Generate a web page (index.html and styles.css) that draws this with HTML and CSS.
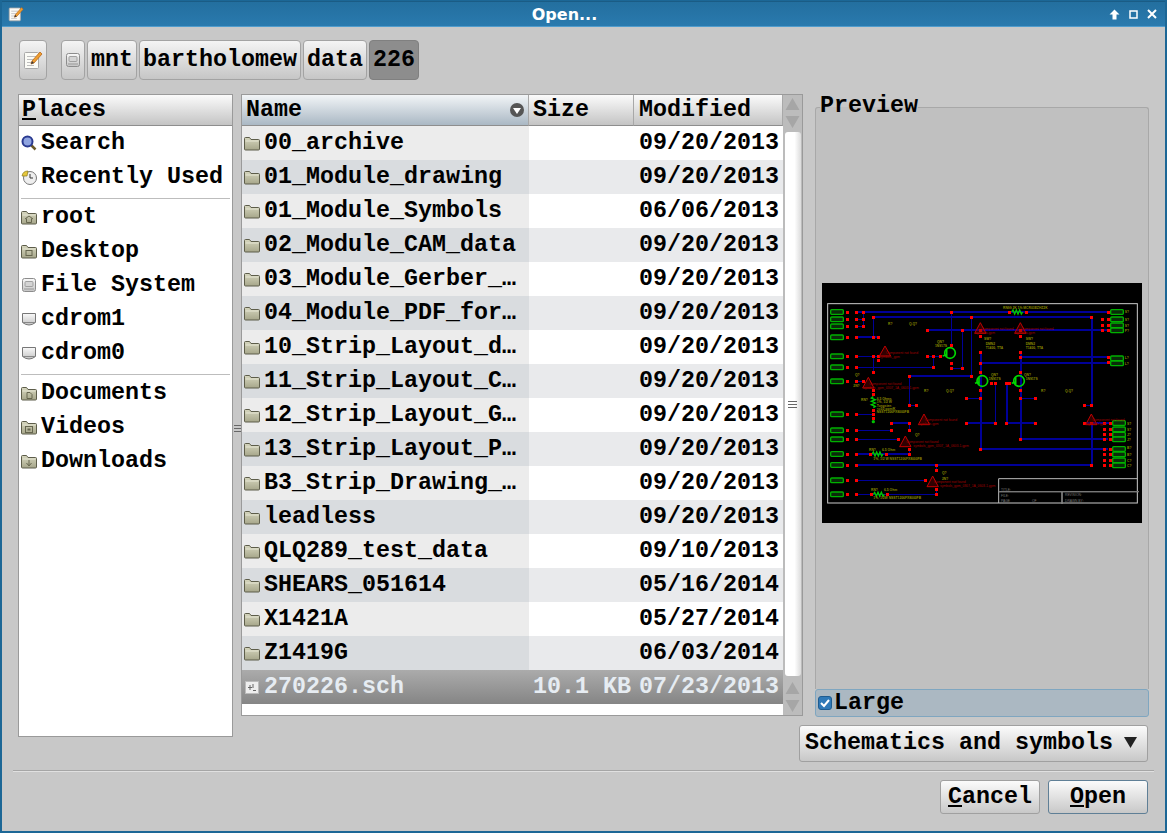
FILE: index.html
```html
<!DOCTYPE html>
<html lang="en">
<head>
  <meta charset="UTF-8">
  <title>Open...</title>
  <link rel="stylesheet" href="styles.css">
</head>
<body>
  <!-- shared icons -->
  <svg class="defs" xmlns="http://www.w3.org/2000/svg">
    <defs>
      <linearGradient id="folderFill" x1="0" y1="0" x2="0" y2="1">
        <stop offset="0" stop-color="#d6d6be"/>
        <stop offset="1" stop-color="#a6a68a"/>
      </linearGradient>
      <linearGradient id="driveFill" x1="0" y1="0" x2="0" y2="1">
        <stop offset="0" stop-color="#fafafa"/>
        <stop offset="1" stop-color="#c4c4c4"/>
      </linearGradient>
      <symbol id="folder" viewBox="0 0 16 16">
        <path d="M.5 3.500q0-1 1-1h4l1.500 2h7.500q1 0 1 1v8.500q0 1-1 1h-13q-1 0-1-1z" fill="url(#folderFill)" stroke="#5d5d4a"/>
        <path d="M1.500 6h13" stroke="#e6e6d4" fill="none"/>
      </symbol>
      <symbol id="drive" viewBox="0 0 16 16">
        <rect x="1.500" y="1.500" width="13" height="13" rx="2" fill="url(#driveFill)" stroke="#8c8c8c"/>
        <rect x="4" y="4.500" width="8" height="5" rx="1" fill="#d4d4d4" stroke="#a0a0a0"/>
        <path d="M3 12h10" stroke="#999"/>
      </symbol>
      <symbol id="cdrom" viewBox="0 0 16 16">
        <path d="M1.500 2.500h13v9q-6.500 5-13 0z" fill="url(#driveFill)" stroke="#777"/>
        <path d="M2 11.500h12" stroke="#888"/>
      </symbol>
      <symbol id="note" viewBox="0 0 20 20">
        <rect x="1.500" y="2.500" width="14" height="16" rx="1" fill="#fbfbf6" stroke="#a8a8a8"/>
        <path d="M4 6.500h9M4 9.500h7M4 12.500h5M4 15.500h7" stroke="#bdbdbd"/>
        <path d="M8 14l1 -3 8-9 2 2-8 9z" fill="#f0a030" stroke="#b8651a" stroke-width=".8"/>
        <path d="M8 14l1-3 2 2z" fill="#3a3a3a"/>
      </symbol>
    </defs>
  </svg>

  <div class="window">
    <div class="titlebar">
      <svg class="title-icon" width="16" height="16" viewBox="0 0 20 20"><use href="#note"/></svg>
      <div class="title">Open...</div>
      <div class="title-controls">
        <svg width="11" height="11" viewBox="0 0 11 11"><path d="M5.500 .5l5 5h-3v5h-4v-5h-3z" fill="#fff"/></svg>
        <svg width="9" height="9" viewBox="0 0 9 9"><rect x="1" y="1" width="7" height="7" fill="none" stroke="#fff" stroke-width="1.500"/></svg>
        <svg width="10" height="10" viewBox="0 0 10 10"><path d="M1 1l8 8M9 1l-8 8" stroke="#fff" stroke-width="2"/></svg>
      </div>
    </div>

    <div class="content">
      <div class="pathbar">
        <button class="tool edit-btn"><svg width="20" height="20"><use href="#note"/></svg></button>
        <div class="crumbs">
          <button class="tool drive-btn"><svg width="16" height="16"><use href="#drive"/></svg></button>
          <button class="tool">mnt</button>
          <button class="tool">bartholomew</button>
          <button class="tool">data</button>
          <button class="tool active">226</button>
        </div>
      </div>

      <div class="main">
        <!-- Places -->
        <div class="places">
          <div class="places-head"><u>P</u>laces</div>
          <div class="place">
            <svg width="16" height="16" viewBox="0 0 16 16"><path d="M10 10l4.500 4.500" stroke="#6b5a2a" stroke-width="2.500"/><circle cx="6.500" cy="6.500" r="5" fill="#8fa4e0" stroke="#2a3a90" stroke-width="2"/></svg>
            Search
          </div>
          <div class="place">
            <svg width="16" height="16" viewBox="0 0 16 16"><circle cx="9" cy="9" r="6.500" fill="#eee" stroke="#777"/><path d="M9 5v4h3" stroke="#333" fill="none"/><path d="M1 7a6 6 0 0 1 6-5l-1 5z" fill="#e6c83c" stroke="#8a7a20" stroke-width=".7"/></svg>
            Recently Used
          </div>
          <div class="place-sep"></div>
          <div class="place">
            <svg width="16" height="16" viewBox="0 0 16 16"><use href="#folder"/><path d="M4 10l4-3 4 3M5.500 9.500v4h5v-4" fill="none" stroke="#66664f"/></svg>
            root
          </div>
          <div class="place">
            <svg width="16" height="16" viewBox="0 0 16 16"><use href="#folder"/><rect x="5" y="7.500" width="6" height="5" fill="none" stroke="#66664f"/></svg>
            Desktop
          </div>
          <div class="place"><svg width="16" height="16"><use href="#drive"/></svg>File System</div>
          <div class="place"><svg width="16" height="16"><use href="#cdrom"/></svg>cdrom1</div>
          <div class="place"><svg width="16" height="16"><use href="#cdrom"/></svg>cdrom0</div>
          <div class="place-sep"></div>
          <div class="place">
            <svg width="16" height="16" viewBox="0 0 16 16"><use href="#folder"/><path d="M6 7.500h3l2 2v4h-5z" fill="none" stroke="#66664f"/></svg>
            Documents
          </div>
          <div class="place">
            <svg width="16" height="16" viewBox="0 0 16 16"><use href="#folder"/><rect x="4.500" y="7.500" width="7" height="6" fill="none" stroke="#66664f"/><rect x="6.500" y="9.500" width="3" height="2" fill="#66664f"/></svg>
            Videos
          </div>
          <div class="place">
            <svg width="16" height="16" viewBox="0 0 16 16"><use href="#folder"/><path d="M8 7v5M5.500 10l2.500 3 2.500-3" fill="none" stroke="#66664f"/></svg>
            Downloads
          </div>
        </div>

        <div class="splitter"><span class="grip"></span></div>

        <div class="right">
          <div class="upper">
            <!-- File list -->
            <div class="files">
              <div class="files-view">
                <div class="files-head">
                  <div class="col-head sorted">Name
                    <svg width="14" height="14" viewBox="0 0 14 14"><circle cx="7" cy="7" r="7" fill="#555"/><path d="M3 5h8l-4 6z" fill="#fff"/></svg>
                  </div>
                  <div class="col-head">Size</div>
                  <div class="col-head modified">Modified</div>
                </div>
                <div class="row"><div class="name"><svg width="16" height="16"><use href="#folder"/></svg>00_archive</div><div class="size"></div><div class="date">09/20/2013</div></div>
                <div class="row"><div class="name"><svg width="16" height="16"><use href="#folder"/></svg>01_Module_drawing</div><div class="size"></div><div class="date">09/20/2013</div></div>
                <div class="row"><div class="name"><svg width="16" height="16"><use href="#folder"/></svg>01_Module_Symbols</div><div class="size"></div><div class="date">06/06/2013</div></div>
                <div class="row"><div class="name"><svg width="16" height="16"><use href="#folder"/></svg>02_Module_CAM_data</div><div class="size"></div><div class="date">09/20/2013</div></div>
                <div class="row"><div class="name"><svg width="16" height="16"><use href="#folder"/></svg>03_Module_Gerber_…</div><div class="size"></div><div class="date">09/20/2013</div></div>
                <div class="row"><div class="name"><svg width="16" height="16"><use href="#folder"/></svg>04_Module_PDF_for…</div><div class="size"></div><div class="date">09/20/2013</div></div>
                <div class="row"><div class="name"><svg width="16" height="16"><use href="#folder"/></svg>10_Strip_Layout_d…</div><div class="size"></div><div class="date">09/20/2013</div></div>
                <div class="row"><div class="name"><svg width="16" height="16"><use href="#folder"/></svg>11_Strip_Layout_C…</div><div class="size"></div><div class="date">09/20/2013</div></div>
                <div class="row"><div class="name"><svg width="16" height="16"><use href="#folder"/></svg>12_Strip_Layout_G…</div><div class="size"></div><div class="date">09/20/2013</div></div>
                <div class="row"><div class="name"><svg width="16" height="16"><use href="#folder"/></svg>13_Strip_Layout_P…</div><div class="size"></div><div class="date">09/20/2013</div></div>
                <div class="row"><div class="name"><svg width="16" height="16"><use href="#folder"/></svg>B3_Strip_Drawing_…</div><div class="size"></div><div class="date">09/20/2013</div></div>
                <div class="row"><div class="name"><svg width="16" height="16"><use href="#folder"/></svg>leadless</div><div class="size"></div><div class="date">09/20/2013</div></div>
                <div class="row"><div class="name"><svg width="16" height="16"><use href="#folder"/></svg>QLQ289_test_data</div><div class="size"></div><div class="date">09/10/2013</div></div>
                <div class="row"><div class="name"><svg width="16" height="16"><use href="#folder"/></svg>SHEARS_051614</div><div class="size"></div><div class="date">05/16/2014</div></div>
                <div class="row"><div class="name"><svg width="16" height="16"><use href="#folder"/></svg>X1421A</div><div class="size"></div><div class="date">05/27/2014</div></div>
                <div class="row"><div class="name"><svg width="16" height="16"><use href="#folder"/></svg>Z1419G</div><div class="size"></div><div class="date">06/03/2014</div></div>
                <div class="row selected"><div class="name"><svg width="16" height="16" viewBox="0 0 16 16"><rect x="1.500" y="2.500" width="13" height="12" fill="#eee" stroke="#bbb"/><path d="M4 8.500h4M6 6v5M9 5v4M9 11.500h3" stroke="#666"/></svg>270226.sch</div><div class="size">10.1 KB</div><div class="date">07/23/2013</div></div>
              </div>
              <div class="scrollbar">
                <svg width="19" height="36" viewBox="0 0 19 36"><path d="M9.500 3l7 12h-14zM2.500 21h14l-7 12z" fill="#a6a6a6"/></svg>
                <div class="thumb"><span class="grip"></span></div>
                <svg width="19" height="36" viewBox="0 0 19 36"><path d="M9.500 3l7 12h-14zM2.500 21h14l-7 12z" fill="#a6a6a6"/></svg>
              </div>
            </div>

            <div class="splitter"></div>

            <!-- Preview -->
            <div class="preview">
              <fieldset class="preview-frame">
                <legend>Preview</legend>
                <svg class="schematic" width="320" height="240" viewBox="6 9 960 720">
                  <rect x="6" y="9" width="960" height="720" fill="#000"/>
                  <rect x="23" y="71" width="929" height="598" fill="none" stroke="#ccc" stroke-width="3"/>
                  <path d="M536 669V596H952M536 635H956M726 635V672" fill="none" stroke="#bbb" stroke-width="3"/>
                  <path d="M536 635H956M726 635V672" fill="none" stroke="#777" stroke-width="4"/>
                  <g class="wires">
                    <path d="M110 96H865M160 111H815M322 150H865M110 118H130M110 139H130M110 171H175M110 229H175M322 229H360M110 262H340M110 304H130M268 288H455M268 376H290M440 355H482M601 355H646M440 429H526M560 429H646M110 403H160M110 451H214M214 429H268M110 478H235M110 522H268M110 555H815M110 601H316M110 643H349M601 477H865M482 507H865M482 248H865M601 230H865M394 265H427M793 376H815M793 429H870"/>
                    <path d="M160 111V171M160 229V277M130 96V139M394 96V196M427 150V265M454 111V288M340 229V262M268 288V376M268 429V451M482 215V507M602 215V477M526 310V429M560 310V429M815 111V376M815 429V555M349 555V571M349 625V643M268 508V522"/>
                  </g>
                  <g class="connectors">
                    <rect x="32" y="89" width="38" height="14" rx="3"/><rect x="32" y="111" width="38" height="14" rx="3"/><rect x="32" y="132" width="38" height="14" rx="3"/><rect x="32" y="165" width="38" height="14" rx="3"/><rect x="32" y="222" width="38" height="14" rx="3"/><rect x="32" y="255" width="38" height="14" rx="3"/><rect x="32" y="297" width="38" height="14" rx="3"/><rect x="32" y="396" width="38" height="14" rx="3"/><rect x="32" y="444" width="38" height="14" rx="3"/><rect x="32" y="471" width="38" height="14" rx="3"/><rect x="32" y="515" width="38" height="14" rx="3"/><rect x="32" y="548" width="38" height="14" rx="3"/><rect x="32" y="594" width="38" height="14" rx="3"/><rect x="32" y="636" width="38" height="14" rx="3"/>
                    <rect x="872" y="89" width="38" height="14" rx="3"/><rect x="872" y="111" width="38" height="14" rx="3"/><rect x="872" y="129" width="38" height="14" rx="3"/><rect x="872" y="144" width="38" height="14" rx="3"/><rect x="872" y="228" width="38" height="14" rx="3"/><rect x="872" y="243" width="38" height="14" rx="3"/>
                    <rect x="878" y="422" width="38" height="14" rx="3"/><rect x="878" y="441" width="38" height="14" rx="3"/><rect x="878" y="457" width="38" height="14" rx="3"/><rect x="878" y="471" width="38" height="14" rx="3"/><rect x="878" y="500" width="38" height="14" rx="3"/><rect x="878" y="516" width="38" height="14" rx="3"/><rect x="878" y="534" width="38" height="14" rx="3"/><rect x="878" y="549" width="38" height="14" rx="3"/>
                  </g>
                  <path class="parts" d="M575 96l4-6 5 12 5-12 5 12 5-12 5 12 4-6M156 522l4-6 5 12 5-12 5 12 5-12 5 12 4-6M160 643l4-6 5 12 5-12 5 12 5-12 5 12 4-6M160 350l-6 4 12 5-12 5 12 5-12 5 12 5-6 4"/>
                  <g class="transistors">
                    <circle cx="390" cy="219" r="16"/><circle cx="487" cy="303" r="16"/><circle cx="597" cy="303" r="16"/>
                    <path d="M380 208V230M368 228L380 224M477 292V314M465 310L477 306M587 292V314M575 310L587 306"/>
                  </g>
                  <circle cx="160" cy="425" r="5" fill="#00c000"/>
                  <path class="nodes" d="M82 96h.1M82 118h.1M82 139h.1M82 172h.1M82 229h.1M82 262h.1M82 304h.1M82 403h.1M82 451h.1M82 478h.1M82 522h.1M82 555h.1M82 601h.1M82 643h.1M110 96h.1M110 118h.1M110 139h.1M110 172h.1M110 229h.1M110 262h.1M110 304h.1M110 403h.1M110 451h.1M110 478h.1M110 522h.1M110 555h.1M110 601h.1M110 643h.1M130 96h.1M130 118h.1M130 139h.1M160 111h.1M160 172h.1M175 172h.1M160 229h.1M175 229h.1M175 240h.1M160 277h.1M130 304h.1M160 330h.1M160 343h.1M160 392h.1M160 403h.1M160 415h.1M394 96h.1M454 111h.1M815 111h.1M568 96h.1M619 96h.1M865 96h.1M322 150h.1M427 150h.1M847 118h.1M865 118h.1M847 136h.1M865 136h.1M847 151h.1M865 151h.1M482 152h.1M602 152h.1M482 170h.1M602 170h.1M394 196h.1M322 229h.1M340 229h.1M361 229h.1M394 250h.1M394 265h.1M427 265h.1M340 262h.1M481 217h.1M601 217h.1M601 232h.1M865 232h.1M481 250h.1M865 248h.1M481 278h.1M601 278h.1M268 289h.1M454 289h.1M514 310h.1M526 310h.1M560 310h.1M568 310h.1M481 331h.1M601 331h.1M268 376h.1M290 376h.1M793 376h.1M815 376h.1M440 355h.1M481 355h.1M601 355h.1M646 355h.1M440 430h.1M526 430h.1M560 430h.1M646 430h.1M214 430h.1M268 430h.1M214 451h.1M268 451h.1M235 478h.1M268 508h.1M151 522h.1M199 522h.1M268 522h.1M481 508h.1M601 478h.1M793 430h.1M815 430h.1M853 430h.1M871 430h.1M853 448h.1M871 448h.1M853 463h.1M871 463h.1M853 478h.1M871 478h.1M853 507h.1M871 507h.1M853 523h.1M871 523h.1M853 541h.1M871 541h.1M853 556h.1M871 556h.1M815 556h.1M349 556h.1M349 571h.1M316 601h.1M349 628h.1M349 643h.1M155 643h.1M202 643h.1"/>
                  <path class="missing" d="M195 198l17 30h-34zM145 292l17 32h-34zM481 128l17 32h-34zM601 128l17 32h-34zM312 402l17 32h-34zM256 468l17 32h-34zM338 588l17 32h-34zM814 402l17 32h-34z"/>
                  <g class="missing-text">
                    <text x="198" y="221">Component not found</text><text x="178" y="233">symbols_gpm</text>
                    <text x="148" y="315">Component not found</text><text x="130" y="327">symbols_gpm_0307_1A_0603-1.gpm</text>
                    <text x="484" y="149">Component not found</text><text x="466" y="162">symbols.gpm</text>
                    <text x="604" y="149">Component not found</text><text x="586" y="162">symbols.gpm</text>
                    <text x="315" y="423">Component not found</text><text x="297" y="435">symbols.gpm</text>
                    <text x="259" y="489">Component not found</text><text x="280" y="501">symbols_gpm_0307_1A_0603-1.gpm</text>
                    <text x="341" y="609">Component not found</text><text x="360" y="621">symbols_gpm_0307_1A_0603-1.gpm</text>
                    <text x="817" y="423">Component not found</text><text x="800" y="435">symbols.gpm</text>
                  </g>
                  <g class="labels">
                    <text x="549" y="86">RN99 2K 1% MCR03EZHZ2K</text>
                    <text x="204" y="134">R?</text><text x="267" y="134">Q.Q?</text>
                    <text x="351" y="188">QN?</text><text x="345" y="200">1N917S</text>
                    <text x="492" y="181">SW?</text><text x="497" y="196">DMN2</text><text x="497" y="206">T1400, TTA</text>
                    <text x="617" y="181">SW?</text><text x="617" y="196">DMN2</text><text x="617" y="206">T1400, TTA</text>
                    <text x="513" y="287">QN?</text><text x="506" y="299">1N917S</text>
                    <text x="612" y="287">QN?</text><text x="617" y="299">1N917S</text>
                    <text x="105" y="287">Q?</text><text x="100" y="320">2N?</text>
                    <text x="312" y="335">R?</text><text x="378" y="335">Q.Q?</text>
                    <text x="663" y="335">R?</text><text x="735" y="335">Q.Q?</text>
                    <text x="123" y="362">RN?</text><text x="170" y="359">6.5 Ohms</text><text x="170" y="369">1%, 1/2 W</text><text x="170" y="382">Tungsten</text><text x="170" y="390">&lt;=50 ppm/K</text><text x="170" y="400">NSST1206FX8000FB</text>
                    <text x="285" y="467">Q?</text>
                    <text x="147" y="512">RN?</text><text x="186" y="512">6.5 Ohm</text><text x="160" y="539">1%, 1/2 W NSST1206FX8000FB</text>
                    <text x="366" y="581">Q?</text><text x="366" y="599">2N?</text>
                    <text x="153" y="632">RN?</text><text x="192" y="632">6.5 Ohm</text><text x="160" y="658">1%, 1/2W NSST1206FX8000FB</text>
                    <text x="914" y="100">S?</text><text x="914" y="122">S?</text><text x="914" y="140">S?</text><text x="914" y="155">P?</text><text x="914" y="236">L?</text><text x="914" y="254">L?</text>
                    <text x="921" y="434">S?</text><text x="921" y="452">S?</text><text x="921" y="467">J?</text><text x="921" y="482">J?</text><text x="921" y="506">B?</text><text x="921" y="527">B?</text><text x="921" y="545">C?</text><text x="921" y="560">C?</text>
                  </g>
                  <g class="block-text">
                    <text x="543" y="632">TITLE:</text><text x="543" y="650">FILE:</text><text x="543" y="665">PAGE</text><text x="636" y="665">OF</text><text x="735" y="647">REVISION:</text><text x="735" y="665">DRAWN BY:</text>
                  </g>
                </svg>
              </fieldset>
              <label class="large">
                <svg width="14" height="14" viewBox="0 0 14 14"><rect x=".5" y=".5" width="13" height="13" rx="2.500" fill="#2f79b8" stroke="#1f5c90"/><path d="M3 7l3 3 5-6" fill="none" stroke="#fff" stroke-width="2"/></svg>
                Large
              </label>
            </div>
          </div>

          <div class="filter">Schematics and symbols
            <svg width="13" height="11" viewBox="0 0 13 11"><path d="M0 0h13l-6.500 11z" fill="#222"/></svg>
          </div>
        </div>
      </div>

      <div class="footer">
        <button class="btn"><u>C</u>ancel</button>
        <button class="btn default"><u>O</u>pen</button>
      </div>
    </div>
  </div>
</body>
</html>
```

FILE: styles.css
```css
* {
  box-sizing: border-box;
}

html, body {
  margin: 0;
  padding: 0;
  height: 100%;
}

body {
  background: #c8c8c8;
  font-family: "Liberation Mono", monospace;
  font-weight: bold;
  font-size: 23.33px;
  color: #000;
  overflow: hidden;
}

svg {
  flex: none;
}

.defs {
  position: absolute;
  width: 0;
  height: 0;
}

.window {
  height: 100vh;
  display: flex;
  flex-direction: column;
  border: 2px solid #1c6796;
  border-top-width: 1px;
  background: #c8c8c8;
}

.titlebar {
  height: 26px;
  flex: none;
  display: flex;
  align-items: center;
  padding-left: 6px;
  color: #fff;
  background: linear-gradient(#236f9f, #2a7aae);
  border-top: 1px solid #1a5c85;
  border-bottom: 1px solid #4f9ccd;
}

.title {
  flex: 1;
  text-align: center;
  font-family: "DejaVu Sans", sans-serif;
  font-size: 16px;
  margin-right: 4px;
}

.title-controls {
  display: flex;
  align-items: center;
  gap: 9px;
  padding-right: 8px;
}

.content {
  flex: 1;
  display: flex;
  flex-direction: column;
  padding: 13px 16px 0 16px;
}

/* path bar */
.pathbar {
  display: flex;
  height: 40px;
  margin-left: 1px;
  gap: 14px;
  margin-bottom: 14px;
}

.crumbs {
  display: flex;
  gap: 2px;
}

button {
  font: inherit;
  color: inherit;
  margin: 0;
}

.tool {
  height: 40px;
  padding: 0 3px;
  display: flex;
  align-items: center;
  justify-content: center;
  border: 1px solid #a3a3a3;
  border-radius: 4px;
  background: linear-gradient(#f4f4f4, #c6c6c6);
}

.edit-btn {
  width: 28px;
}

.drive-btn {
  width: 24px;
}

.tool.active {
  background: #8d8d8d;
  border-color: #808080;
  width: 50px;
}

/* main area */
.main {
  display: flex;
  height: 668px;
}

.places {
  width: 215px;
  height: 643px;
  flex: none;
  background: #fff;
  border: 1px solid #9a9a9a;
}

.places-head {
  height: 31px;
  line-height: 30px;
  padding-left: 3px;
  background: linear-gradient(#fbfbfb, #c4c4c4);
  border-bottom: 1px solid #8e8e8e;
}

.place {
  height: 34px;
  display: flex;
  align-items: center;
  gap: 4px;
  padding-left: 2px;
}

.place-sep {
  height: 5px;
  margin: 0 2px 1px;
  border-bottom: 1px solid #bdbdbd;
}

.splitter {
  width: 8px;
  flex: none;
  display: flex;
  align-items: center;
  justify-content: center;
}

.grip {
  width: 7px;
  height: 7px;
  border-top: 1px solid #666;
  border-bottom: 1px solid #666;
  background: linear-gradient(transparent 2px, #666 2px, #666 3px, transparent 3px);
}

.right {
  flex: 1;
  display: flex;
  flex-direction: column;
}

.upper {
  height: 623px;
  display: flex;
}

/* file list */
.files {
  width: 562px;
  height: 622px;
  flex: none;
  display: flex;
  border: 1px solid #9a9a9a;
  background: #fff;
}

.files-view {
  width: 541px;
  flex: none;
}

.files-head,
.row {
  display: grid;
  grid-template-columns: 287px 105px 149px;
}

.col-head {
  height: 31px;
  line-height: 30px;
  padding-left: 4px;
  background: linear-gradient(#fbfbfb, #c4c4c4);
  border-right: 1px solid #a8a8a8;
  border-bottom: 1px solid #8e8e8e;
}

.col-head.sorted {
  display: flex;
  align-items: center;
  justify-content: space-between;
  padding-right: 4px;
  background: linear-gradient(#f2f5f7, #aab8c4);
}

.col-head.modified {
  padding-left: 5px;
}

.row {
  height: 34px;
  line-height: 34px;
  white-space: nowrap;
}

.name {
  display: flex;
  align-items: center;
  gap: 4px;
  padding-left: 2px;
  background: #ececec;
}

.date {
  padding-left: 5px;
}

.size {
  text-align: right;
  padding-right: 3px;
}

.row:nth-child(odd) .name {
  background: #d9dcdf;
}

.row:nth-child(odd) .size,
.row:nth-child(odd) .date {
  background: #e9eaec;
}

.row.selected {
  color: #e6ecf2;
  background: linear-gradient(#ababab, #858585);
}

.row.selected .name,
.row.selected .size,
.row.selected .date {
  background: none;
}

.scrollbar {
  flex: 1;
  display: flex;
  flex-direction: column;
  justify-content: space-between;
  align-items: center;
  background: #bcbcbc;
}

.thumb {
  flex: 1;
  width: 16px;
  display: flex;
  align-items: center;
  justify-content: center;
  background: linear-gradient(to right, #fff 60%, #dcdcdc);
  border-radius: 3px;
  margin: 1px 0 3px;
}

.thumb .grip {
  width: 9px;
}

/* preview */
.preview {
  flex: 1;
  display: flex;
  flex-direction: column;
  padding-left: 4px;
}

.preview-frame {
  flex: 1;
  min-height: 0;
  margin: 0;
  padding: 0 0 3px;
  display: flex;
  align-items: center;
  justify-content: center;
  border: 1px solid #a8a8a8;
  border-bottom: none;
  border-radius: 3px 3px 0 0;
  background: #c0c0c0;
}

.preview-frame legend {
  margin-left: 4px;
  line-height: 22px;
  padding: 1px 0 3px;
}

.schematic {
  display: block;
}

.wires path {
  fill: none;
  stroke: #000098;
  stroke-width: 5;
  shape-rendering: crispEdges;
}

.connectors rect {
  fill: #0a2a0a;
  stroke: #00b000;
  stroke-width: 4;
}

.parts {
  fill: none;
  stroke: #00c800;
  stroke-width: 4;
}

.transistors circle,
.transistors path {
  fill: none;
  stroke: #00d800;
  stroke-width: 5;
}

.nodes {
  fill: none;
  stroke: #ff0000;
  stroke-width: 9;
  stroke-linecap: square;
  shape-rendering: crispEdges;
}

.missing {
  fill: rgba(120, 0, 0, 0.4);
  stroke: #c00000;
  stroke-width: 3;
}

.missing-text text {
  font-family: "Liberation Sans", sans-serif;
  font-weight: normal;
  font-size: 10px;
  fill: #a00000;
}

.labels text {
  font-family: "Liberation Sans", sans-serif;
  font-size: 10px;
  fill: #8a8a00;
}

.block-text text {
  font-family: "Liberation Sans", sans-serif;
  font-weight: normal;
  font-size: 10px;
  fill: #777;
}

.large {
  height: 28px;
  flex: none;
  display: flex;
  align-items: center;
  gap: 2px;
  padding-left: 2px;
  background: #abb8c2;
  border: 1px solid #7fa6c0;
  border-radius: 3px;
}

.filter {
  width: 349px;
  height: 37px;
  margin: 8px 1px 0 auto;
  padding: 0 10px 2px 5px;
  display: flex;
  align-items: center;
  justify-content: space-between;
  border: 1px solid #a0a0a0;
  border-radius: 3px;
  background: linear-gradient(#fbfbfb, #c8c8c8);
}

/* footer */
.footer {
  margin: 8px -5px 0 -5px;
  padding: 9px 6px 0 0;
  display: flex;
  justify-content: flex-end;
  gap: 8px;
  border-top: 1px solid #a6a6a6;
  box-shadow: inset 0 1px 0 #e0e0e0;
}

.btn {
  width: 100px;
  height: 34px;
  padding: 0;
  border: 1px solid #a0a0a0;
  border-radius: 3px;
  background: linear-gradient(#fbfbfb, #c8c8c8);
}

.btn.default {
  border-color: #5f7f96;
}
```
